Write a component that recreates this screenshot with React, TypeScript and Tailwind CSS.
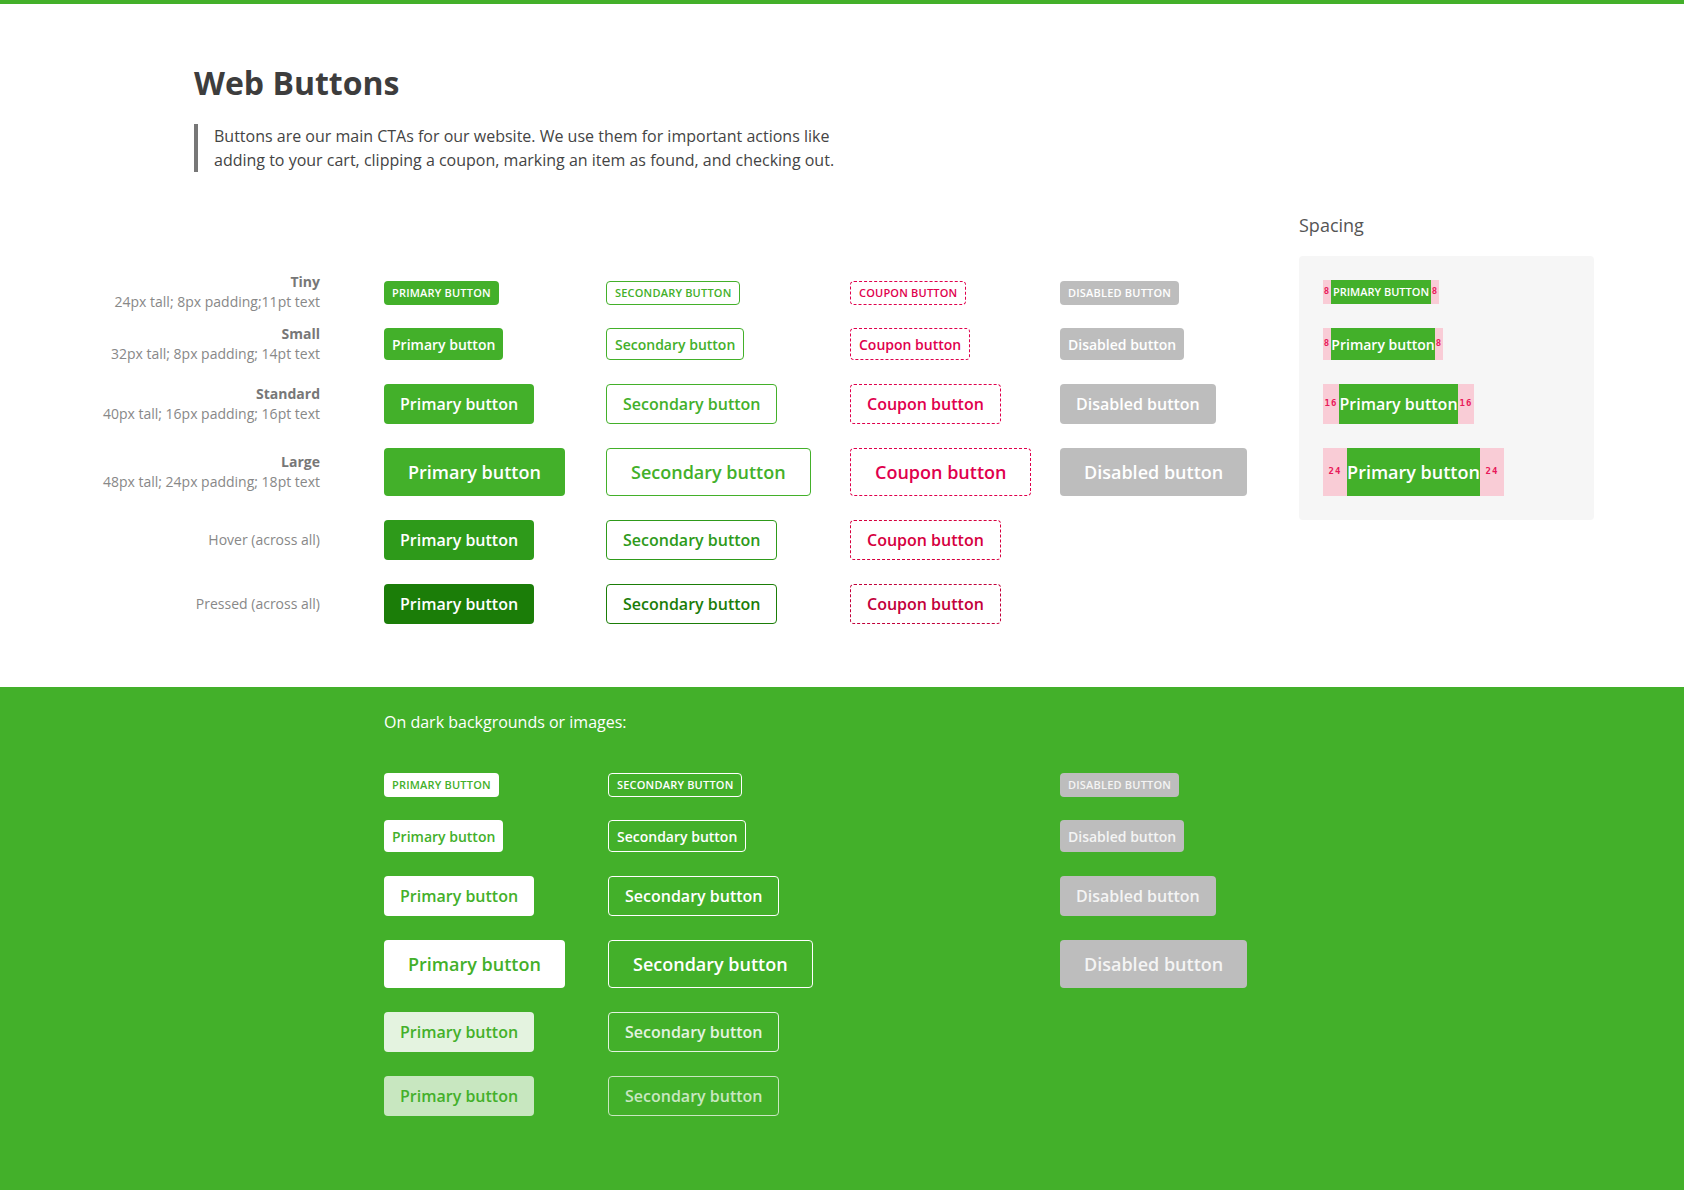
import type { ReactNode } from 'react';

type Size = 'tiny' | 'small' | 'standard' | 'large';

const sizes: Record<Size, string> = {
  tiny: 'h-6 px-2 text-[11px] tracking-[0.2px]',
  small: 'h-8 px-2 text-[14px]',
  standard: 'h-10 px-4 text-[16px]',
  large: 'h-12 px-6 text-[18px]',
};

const variants = {
  primary: 'bg-[#43b02a] text-white',
  secondary: 'border border-[#43b02a] text-[#43b02a] bg-white',
  coupon: 'border border-dashed border-[#e0004d] text-[#e0004d]',
  disabled: 'bg-[#bdbdbd] text-white',
  primaryHover: 'bg-[#2e9a1a] text-white',
  primaryPressed: 'bg-[#1b7d08] text-white',
  secondaryHover: 'border border-[#2e9a1a] text-[#2e9a1a] bg-white',
  secondaryPressed: 'border border-[#1b7d08] text-[#1b7d08] bg-white',
  couponHover: 'border border-dashed border-[#d6003f] text-[#d6003f]',
  couponPressed: 'border border-dashed border-[#c2003b] text-[#c2003b]',
  darkPrimary: 'bg-white text-[#43b02a]',
  darkSecondary: 'border border-white text-white',
  darkDisabled: 'bg-[#bdbdbd] text-[#f4f4f4]',
  darkPrimaryHover: 'bg-[#e4f3e0] text-[#43b02a]',
  darkPrimaryPressed: 'bg-[#c8e7c0] text-[#43b02a]',
  darkSecondaryHover: 'border border-[#e4f3e0] text-[#e4f3e0]',
  darkSecondaryPressed: 'border border-[#c8e7c0] text-[#c8e7c0]',
};

type Variant = keyof typeof variants;

function Btn({ size, variant, children }: { size: Size; variant: Variant; children: ReactNode }) {
  return (
    <span
      className={`inline-flex items-center justify-center whitespace-nowrap rounded-[4px] font-semibold ${sizes[size]} ${variants[variant]}`}
    >
      {children}
    </span>
  );
}

function label(size: Size, word: string) {
  return size === 'tiny' ? `${word.toUpperCase()} BUTTON` : `${word} button`;
}

interface RowProps {
  h: string;
  title?: string;
  sub: string;
  children: ReactNode;
}

function Row({ h, title, sub, children }: RowProps) {
  return (
    <div className={`flex items-center ${h}`}>
      <div className="w-[384px] shrink-0 pr-16 text-right text-[14px] leading-5">
        {title && <p className="font-bold text-[#777]">{title}</p>}
        <p className="text-[#888]">{sub}</p>
      </div>
      {children}
    </div>
  );
}

function LightRow({ h, size, title, sub, state = '' }: { h: string; size: Size; title?: string; sub: string; state?: '' | 'Hover' | 'Pressed' }) {
  return (
    <Row h={h} title={title} sub={sub}>
      <div className="w-[222px] shrink-0">
        <Btn size={size} variant={`primary${state}` as Variant}>{label(size, 'Primary')}</Btn>
      </div>
      <div className="w-[244px] shrink-0">
        <Btn size={size} variant={`secondary${state}` as Variant}>{label(size, 'Secondary')}</Btn>
      </div>
      <div className="w-[210px] shrink-0">
        <Btn size={size} variant={`coupon${state}` as Variant}>{label(size, 'Coupon')}</Btn>
      </div>
      {state === '' && (
        <div className="shrink-0">
          <Btn size={size} variant="disabled">{label(size, 'Disabled')}</Btn>
        </div>
      )}
    </Row>
  );
}

function DarkRow({ h, size, state = '' }: { h: string; size: Size; state?: '' | 'Hover' | 'Pressed' }) {
  return (
    <div className={`flex items-center ${h}`}>
      <div className="w-[384px] shrink-0" />
      <div className="w-[224px] shrink-0">
        <Btn size={size} variant={`darkPrimary${state}` as Variant}>{label(size, 'Primary')}</Btn>
      </div>
      <div className="w-[452px] shrink-0">
        <Btn size={size} variant={`darkSecondary${state}` as Variant}>{label(size, 'Secondary')}</Btn>
      </div>
      {state === '' && (
        <div className="shrink-0">
          <Btn size={size} variant="darkDisabled">{label(size, 'Disabled')}</Btn>
        </div>
      )}
    </div>
  );
}

function Pad({ w, n }: { w: string; n: string }) {
  return (
    <div className={`flex items-center justify-center bg-[#f9ccd6] font-['DejaVu_Sans_Mono',monospace] text-[9px] font-bold tracking-[1px] text-[#e8195a] ${w}`}>
      {n}
    </div>
  );
}

function SpacingRow({ h, pad, n, w, text, fs }: { h: string; pad: string; n: string; w: string; text: string; fs: string }) {
  return (
    <div className={`flex ${h}`}>
      <Pad w={pad} n={n} />
      <div className={`flex items-center justify-center whitespace-nowrap bg-[#43b02a] font-semibold text-white ${w} ${fs}`}>{text}</div>
      <Pad w={pad} n={n} />
    </div>
  );
}

export default function App() {
  return (
    <div className="min-h-screen bg-white font-['Open_Sans',sans-serif]">
      <div className="h-1 bg-[#43b02a]" />

      <div className="pl-[194px] pt-[59px]">
        <h1 className="text-[32px] font-bold leading-[40px] text-[#3d3d3d]">Web Buttons</h1>
        <p className="mt-[21px] w-[660px] border-l-4 border-[#777] pl-4 text-[16px] leading-6 text-[#444]">
          Buttons are our main CTAs for our website. We use them for important actions like adding to your cart,
          clipping a coupon, marking an item as found, and checking out.
        </p>
      </div>

      <div className="mt-10 flex pb-[63px]">
        <div className="w-[1299px] shrink-0 pt-[68px]">
          <div className="flex flex-col gap-6">
            <LightRow h="h-6" size="tiny" title="Tiny" sub="24px tall; 8px padding;11pt text" />
            <LightRow h="h-8" size="small" title="Small" sub="32px tall; 8px padding; 14pt text" />
            <LightRow h="h-10" size="standard" title="Standard" sub="40px tall; 16px padding; 16pt text" />
            <LightRow h="h-12" size="large" title="Large" sub="48px tall; 24px padding; 18pt text" />
            <LightRow h="h-10" size="standard" sub="Hover (across all)" state="Hover" />
            <LightRow h="h-10" size="standard" sub="Pressed (across all)" state="Pressed" />
          </div>
        </div>

        <div className="shrink-0">
          <p className="text-[18px] leading-[26px] text-[#555]">Spacing</p>
          <div className="mt-[18px] flex w-[295px] flex-col gap-6 rounded-[4px] bg-[#f6f6f6] p-6">
            <SpacingRow h="h-6" pad="w-2" n="8" w="w-[100px]" fs="text-[11px]" text="PRIMARY BUTTON" />
            <SpacingRow h="h-8" pad="w-2" n="8" w="w-[104px]" fs="text-[14px]" text="Primary button" />
            <SpacingRow h="h-10" pad="w-4" n="16" w="w-[119px]" fs="text-[16px]" text="Primary button" />
            <SpacingRow h="h-12" pad="w-6" n="24" w="w-[133px]" fs="text-[18px]" text="Primary button" />
          </div>
        </div>
      </div>

      <div className="bg-[#43b02a] pb-[74px] pt-[23px]">
        <p className="pl-[384px] text-[16px] leading-6 text-white">On dark backgrounds or images:</p>
        <div className="mt-[38px] flex flex-col gap-6">
          <DarkRow h="h-6" size="tiny" />
          <DarkRow h="h-8" size="small" />
          <DarkRow h="h-10" size="standard" />
          <DarkRow h="h-12" size="large" />
          <DarkRow h="h-10" size="standard" state="Hover" />
          <DarkRow h="h-10" size="standard" state="Pressed" />
        </div>
      </div>
    </div>
  );
}
